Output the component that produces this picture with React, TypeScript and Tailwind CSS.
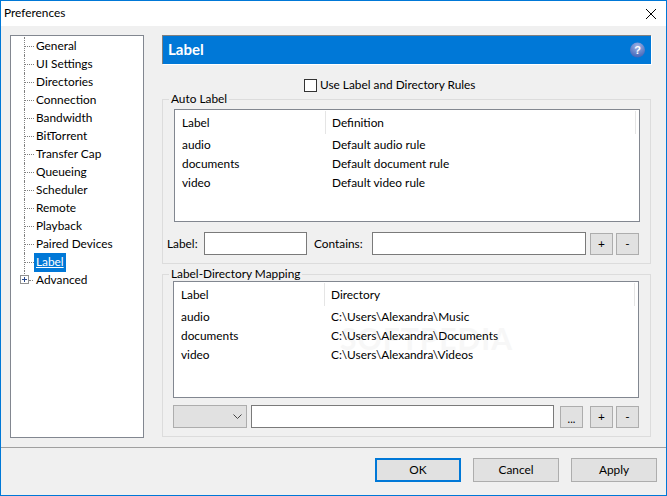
import React from "react";

const treeItems = ["General","UI Settings","Directories","Connection","Bandwidth","BitTorrent","Transfer Cap","Queueing","Scheduler","Remote","Playback","Paired Devices","Label"];

function TreeRow({ label, selected, last }: { label: string; selected?: boolean; last?: boolean }) {
  return (
    <div className="relative h-[18px] flex items-center pl-[25px]">
      <span className={last ? "absolute left-[13px] top-0 h-[5px] border-l border-dotted border-[#808080]" : "absolute left-[13px] top-0 h-[18px] border-l border-dotted border-[#808080]"} />
      {last ? (
        <span className="absolute left-[9px] top-[4px] w-[9px] h-[9px] bg-white border border-[#919191] flex items-center justify-center">
          <svg width="7" height="7" viewBox="0 0 7 7"><path d="M1 3.5H6M3.5 1V6" stroke="#2a4a8c" strokeWidth="1" /></svg>
        </span>
      ) : (
        <span className="absolute left-[14px] top-[9px] w-[9px] border-t border-dotted border-[#808080]" />
      )}
      {last && <span className="absolute left-[18px] top-[9px] w-[4px] border-t border-dotted border-[#808080]" />}
      <span className={selected ? "bg-[#0078d7] text-white underline px-[2px] h-[19px] leading-[18px] -ml-[2px]" : "leading-[18px]"}>{label}</span>
    </div>
  );
}

function SmallButton({ children, className }: { children: React.ReactNode; className?: string }) {
  return (
    <button className={"w-[23px] h-[22px] bg-[#e1e1e1] border border-[#adadad] flex items-center justify-center text-black " + (className ?? "")}>
      {children}
    </button>
  );
}

function ListBox({ second, rows, h, w, children }: { second: string; rows: [string, string][]; h: string; w: string; children?: React.ReactNode }) {
  return (
    <div className={"relative bg-white border border-[#828790] flex flex-col " + h + " " + w}>
      {children}
      <div className="relative flex h-[24px] pt-px items-stretch">
        <div className="w-[151px] pl-[7px] border-r border-[#e5e5e5] flex items-center">Label</div>
        <div className="flex-1 pl-[6px] border-r border-[#e5e5e5] mr-[3px] flex items-center">{second}</div>
      </div>
      <div className="relative mt-[1px]">
        {rows.map(([a, b]) => (
          <div key={a} className="flex h-[19px] items-center">
            <div className="w-[151px] pl-[7px]">{a}</div>
            <div className="pl-[6px]">{b}</div>
          </div>
        ))}
      </div>
    </div>
  );
}

function TextInput({ w }: { w: string }) {
  return <div className={"h-[23px] bg-white border border-[#7a7a7a] " + w} />;
}

function Group({ title, className, children }: { title: string; className?: string; children: React.ReactNode }) {
  return (
    <fieldset className={"border border-[#dcdcdc] w-[489px] " + (className ?? "")}>
      <legend className="ml-[6px] px-[2px] h-4 leading-4">{title}</legend>
      {children}
    </fieldset>
  );
}

export default function App() {
  return (
    <div className="w-[667px] h-[496px] border border-[#0078d7] bg-[#f0f0f0] flex flex-col overflow-hidden text-[11.85px] text-black font-['Lato','Noto_Sans',sans-serif]">
      <div className="h-[25px] bg-white flex items-center justify-between pl-[3px] pr-[10px] shrink-0">
        <span className="pb-[2px]">Preferences</span>
        <svg width="10" height="10" viewBox="0 0 10 10"><path d="M0 0L10 10M10 0L0 10" stroke="#000" strokeWidth="1" /></svg>
      </div>

      <div className="flex-1 flex pl-[9px] pt-[9px] gap-[18px] min-h-0">
        <div className="w-[134px] h-[403px] bg-white border border-[#828790] pt-px shrink-0">
          {treeItems.map((t) => (
            <TreeRow key={t} label={t} selected={t === "Label"} />
          ))}
          <TreeRow label="Advanced" last />
        </div>

        <div className="w-[489px] flex flex-col">
          <div className="h-[29px] bg-[#0078d7] border-t border-l border-[#808080] shadow-[1px_1px_0_#fff] flex items-center justify-between pl-[5px] pr-[5px]">
            <span className="text-white font-bold text-[15px] pb-[2px]">Label</span>
            <svg width="16" height="16" viewBox="0 0 16 16">
              <defs>
                <radialGradient id="h" cx="50%" cy="25%" r="80%">
                  <stop offset="0%" stopColor="#9fb4e6" />
                  <stop offset="100%" stopColor="#3c5fb4" />
                </radialGradient>
              </defs>
              <circle cx="7.5" cy="8" r="7.5" fill="url(#h)" />
              <text x="7.5" y="12" textAnchor="middle" fontSize="11" fontWeight="700" fill="#fff" fontFamily="Liberation Sans">?</text>
            </svg>
          </div>

          <div className="h-[27px] flex items-center pl-[142px] pt-[15px]">
            <span className="w-[13px] h-[13px] bg-white border border-[#333333] mr-[3px] shrink-0" />
            <span>Use Label and Directory Rules</span>
          </div>

          <Group title="Auto Label" className="h-[173px]">
            <div className="pl-[11px] pt-[2px]">
              <ListBox
                second="Definition"
                w="w-[466px]"
                h="h-[113px]"
                rows={[["audio","Default audio rule"],["documents","Default document rule"],["video","Default video rule"]]}
              />
            </div>
            <div className="flex items-center pl-[4px] mt-[10px]">
              <span className="w-[37px]">Label:</span>
              <TextInput w="w-[103px]" />
              <span className="ml-[7px] w-[58px]">Contains:</span>
              <TextInput w="w-[214px]" />
              <SmallButton className="ml-[4px]">+</SmallButton>
              <SmallButton className="ml-[3px]">-</SmallButton>
            </div>
          </Group>

          <Group title="Label-Directory Mapping" className="h-[171px] mt-[2px]">
            <div className="pl-[10px] -mt-px">
              <ListBox
                second="Directory"
                w="w-[466px]"
                h="h-[117px]"
                rows={[["audio","C:\\Users\\Alexandra\\Music"],["documents","C:\\Users\\Alexandra\\Documents"],["video","C:\\Users\\Alexandra\\Videos"]]}
              >
                <span className="absolute left-[166px] top-[34px] text-[30px] tracking-[1px] text-[#f7f7f7] font-bold pointer-events-none">SOFTPEDIA</span>
              </ListBox>
            </div>
            <div className="flex items-center pl-[10px] mt-[7px]">
              <div className="w-[74px] h-[23px] bg-[#e1e1e1] border border-[#adadad] flex items-center justify-end pr-[4px]">
                <svg width="9" height="5" viewBox="0 0 9 5"><path d="M0.5 0.5L4.5 4.5L8.5 0.5" stroke="#444" strokeWidth="1" fill="none" /></svg>
              </div>
              <TextInput w="w-[303px] ml-[4px]" />
              <SmallButton className="ml-[6px]"><span className="leading-none text-[11px] -mb-1">...</span></SmallButton>
              <SmallButton className="ml-[7px]">+</SmallButton>
              <SmallButton className="ml-[3px]">-</SmallButton>
            </div>
          </Group>
        </div>
      </div>

      <div className="h-[48px] shrink-0 border-t border-[#a0a0a0] flex items-start justify-end gap-[12px] pt-[10px] pr-[9px]">
        <button className="w-[86px] h-[24px] bg-[#e1e1e1] border-2 border-[#0078d7]">OK</button>
        <button className="w-[86px] h-[24px] bg-[#e1e1e1] border border-[#adadad]">Cancel</button>
        <button className="w-[86px] h-[24px] bg-[#e1e1e1] border border-[#adadad]">Apply</button>
      </div>
    </div>
  );
}
